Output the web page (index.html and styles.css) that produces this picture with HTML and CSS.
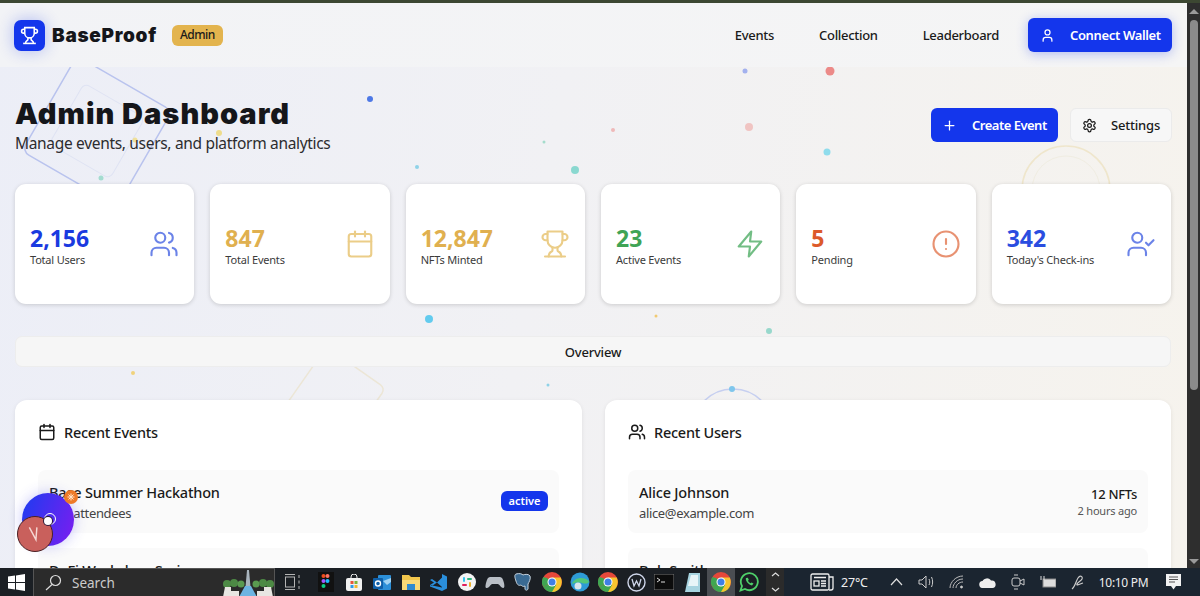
FILE: index.html
```html
<!DOCTYPE html>
<html lang="en">
<head>
    <meta charset="UTF-8">
    <title>BaseProof Admin Dashboard</title>
    <link rel="stylesheet" href="styles.css">
</head>
<body>

<svg class="sprite" aria-hidden="true">
    <symbol id="i_trophy" viewBox="0 0 24 24"><path d="M6 9H4.5a2.5 2.5 0 0 1 0-5H6"/><path d="M18 9h1.5a2.5 2.5 0 0 0 0-5H18"/><path d="M4 22h16"/><path d="M10 14.66V17c0 .55-.47.98-.97 1.21C7.85 18.75 7 20.24 7 22"/><path d="M14 14.66V17c0 .55.47.98.97 1.21C16.15 18.75 17 20.24 17 22"/><path d="M18 2H6v7a6 6 0 0 0 12 0V2Z"/></symbol>
    <symbol id="i_users" viewBox="0 0 24 24"><path d="M16 21v-2a4 4 0 0 0-4-4H6a4 4 0 0 0-4 4v2"/><circle cx="9" cy="7" r="4"/><path d="M22 21v-2a4 4 0 0 0-3-3.87"/><path d="M16 3.13a4 4 0 0 1 0 7.75"/></symbol>
    <symbol id="i_calendar" viewBox="0 0 24 24"><path d="M8 2v4"/><path d="M16 2v4"/><rect width="18" height="18" x="3" y="4" rx="2"/><path d="M3 10h18"/></symbol>
    <symbol id="i_zap" viewBox="0 0 24 24"><path d="M13 2 3 14h9l-1 8 10-12h-9l1-8z"/></symbol>
    <symbol id="i_alert" viewBox="0 0 24 24"><circle cx="12" cy="12" r="10"/><path d="M12 8v4"/><path d="M12 16h.01"/></symbol>
    <symbol id="i_check" viewBox="0 0 24 24"><path d="M16 21v-2a4 4 0 0 0-4-4H6a4 4 0 0 0-4 4v2"/><circle cx="9" cy="7" r="4"/><path d="M16 11l2 2 4-4"/></symbol>
    <symbol id="i_user" viewBox="0 0 24 24"><path d="M19 21v-2a4 4 0 0 0-4-4H9a4 4 0 0 0-4 4v2"/><circle cx="12" cy="7" r="4"/></symbol>
    <symbol id="i_plus" viewBox="0 0 24 24"><path d="M5 12h14"/><path d="M12 5v14"/></symbol>
    <symbol id="i_gear" viewBox="0 0 24 24"><path d="M12.22 2h-.44a2 2 0 0 0-2 2v.18a2 2 0 0 1-1 1.73l-.43.25a2 2 0 0 1-2 0l-.15-.08a2 2 0 0 0-2.73.73l-.22.38a2 2 0 0 0 .73 2.73l.15.1a2 2 0 0 1 1 1.72v.51a2 2 0 0 1-1 1.74l-.15.09a2 2 0 0 0-.73 2.73l.22.38a2 2 0 0 0 2.73.73l.15-.08a2 2 0 0 1 2 0l.43.25a2 2 0 0 1 1 1.73V20a2 2 0 0 0 2 2h.44a2 2 0 0 0 2-2v-.18a2 2 0 0 1 1-1.73l.43-.25a2 2 0 0 1 2 0l.15.08a2 2 0 0 0 2.73-.73l.22-.39a2 2 0 0 0-.73-2.73l-.15-.08a2 2 0 0 1-1-1.74v-.5a2 2 0 0 1 1-1.74l.15-.09a2 2 0 0 0 .73-2.73l-.22-.38a2 2 0 0 0-2.73-.73l-.15.08a2 2 0 0 1-2 0l-.43-.25a2 2 0 0 1-1-1.73V4a2 2 0 0 0-2-2z"/><circle cx="12" cy="12" r="3"/></symbol>
    <symbol id="chrome_logo" viewBox="0 0 20 20">
        <circle cx="10" cy="10" r="10" fill="#e5483a"/>
        <path d="M10 10 1.300 15A10 10 0 0 1 1.300 5L5 6z" fill="#3fa652"/>
        <path d="M10 10 1.300 15A10 10 0 0 0 10 20a10 10 0 0 0 8.700-5z" fill="#3fa652"/>
        <path d="M10 5.500h8.700A10 10 0 0 1 10 20l4-7z" fill="#f6c42f"/>
        <circle cx="10" cy="10" r="4.500" fill="#fff"/>
        <circle cx="10" cy="10" r="3.500" fill="#3f7fe6"/>
    </symbol>
</svg>

<div class="top_strip"></div>

<div class="window">
    <div class="page">
        <!-- floating shapes behind the content -->
        <svg class="backdrop" viewBox="0 3 1187 565" aria-hidden="true">
            <g fill="none">
                <rect x="42" y="76" width="110" height="110" rx="8" transform="rotate(30 97 131)" stroke="#b9c3ee" stroke-width="1.5"/>
                <rect x="62" y="96" width="70" height="70" rx="6" transform="rotate(30 97 131)" stroke="#dfe3f3"/>
                <circle cx="1066" cy="190" r="44" stroke="#efe6cc" stroke-width="1.5"/>
                <circle cx="1066" cy="190" r="34" stroke="#f0ede2"/>
                <rect x="326.500" y="347" width="72" height="72" rx="6" transform="rotate(35 326.500 347)" stroke="#ece6d6" stroke-width="1.5"/>
                <circle cx="733" cy="430" r="41" stroke="#c6cff0" stroke-width="1.5"/>
            </g>
            <circle cx="370" cy="99" r="3" fill="#4d78e6"/>
            <circle cx="745" cy="71" r="2.5" fill="#a3b1ee"/>
            <circle cx="830" cy="71" r="4.5" fill="#ec8a88"/>
            <circle cx="749" cy="127" r="4" fill="#f0c4c2"/>
            <circle cx="827" cy="152" r="3.5" fill="#8fdcec"/>
            <circle cx="544" cy="142" r="1.5" fill="#a5dccc"/>
            <circle cx="613" cy="130" r="2" fill="#efb9b9"/>
            <circle cx="417" cy="167" r="2" fill="#8fd2e8"/>
            <circle cx="575" cy="170" r="4" fill="#8ad8d0"/>
            <circle cx="135" cy="140" r="2.5" fill="#efe09a"/>
            <circle cx="219" cy="133" r="3" fill="#eedc8c"/>
            <circle cx="101" cy="178" r="2.5" fill="#a4dcd0"/>
            <circle cx="429" cy="319" r="4" fill="#63cbee"/>
            <circle cx="656" cy="316" r="1.5" fill="#f1ca72"/>
            <circle cx="769" cy="331" r="3" fill="#98d8cc"/>
            <circle cx="133" cy="373" r="2" fill="#f0d27c"/>
            <circle cx="548" cy="385" r="1.5" fill="#8fd2e8"/>
            <circle cx="732" cy="389" r="3" fill="#7fc6ec"/>
        </svg>

        <div class="nav">
            <div class="logo">
                <svg class="logo_icon" viewBox="0 0 24 24"><use href="#i_trophy"/></svg>
            </div>
            <div class="logo_text">BaseProof</div>
            <div class="admin_badge">Admin</div>
            <div class="nav_links">
                <a href="#" class="nav_link">Events</a>
                <a href="#" class="nav_link">Collection</a>
                <a href="#" class="nav_link">Leaderboard</a>
            </div>
            <a href="#" class="btn btn_primary btn_wallet">
                <svg class="btn_icon" viewBox="0 0 24 24"><use href="#i_user"/></svg>
                Connect Wallet
            </a>
        </div>

        <div class="content">
            <div class="head">
                <div>
                    <h1 class="head_title">Admin Dashboard</h1>
                    <p class="head_intro">Manage events, users, and platform analytics</p>
                </div>
                <div class="head_actions">
                    <a href="#" class="btn btn_primary btn_create">
                        <svg class="btn_icon" viewBox="0 0 24 24"><use href="#i_plus"/></svg>
                        Create Event
                    </a>
                    <a href="#" class="btn btn_light">
                        <svg class="btn_icon" viewBox="0 0 24 24"><use href="#i_gear"/></svg>
                        Settings
                    </a>
                </div>
            </div>

            <div class="stats">
                <div class="stat">
                    <div class="stat_text"><div class="stat_value blue">2,156</div><div class="stat_label">Total Users</div></div>
                    <svg class="stat_icon stroke_blue" viewBox="0 0 24 24"><use href="#i_users"/></svg>
                </div>
                <div class="stat">
                    <div class="stat_text"><div class="stat_value gold">847</div><div class="stat_label">Total Events</div></div>
                    <svg class="stat_icon stroke_gold" viewBox="0 0 24 24"><use href="#i_calendar"/></svg>
                </div>
                <div class="stat">
                    <div class="stat_text"><div class="stat_value gold">12,847</div><div class="stat_label">NFTs Minted</div></div>
                    <svg class="stat_icon stroke_gold" viewBox="0 0 24 24"><use href="#i_trophy"/></svg>
                </div>
                <div class="stat">
                    <div class="stat_text"><div class="stat_value green">23</div><div class="stat_label">Active Events</div></div>
                    <svg class="stat_icon stroke_green" viewBox="0 0 24 24"><use href="#i_zap"/></svg>
                </div>
                <div class="stat">
                    <div class="stat_text"><div class="stat_value orange">5</div><div class="stat_label">Pending</div></div>
                    <svg class="stat_icon stroke_orange" viewBox="0 0 24 24"><use href="#i_alert"/></svg>
                </div>
                <div class="stat">
                    <div class="stat_text"><div class="stat_value blue2">342</div><div class="stat_label">Today's Check-ins</div></div>
                    <svg class="stat_icon stroke_blue" viewBox="0 0 24 24"><use href="#i_check"/></svg>
                </div>
            </div>

            <div class="tabs">Overview</div>

            <div class="panels">
                <div class="panel">
                    <div class="panel_title">
                        <svg class="panel_icon" viewBox="0 0 24 24"><use href="#i_calendar"/></svg>
                        Recent Events
                    </div>
                    <div class="row">
                        <div>
                            <div class="row_name">Base Summer Hackathon</div>
                            <div class="row_sub">156 attendees</div>
                        </div>
                        <span class="tag_active">active</span>
                    </div>
                    <div class="row">
                        <div class="row_name">DeFi Workshop Series</div>
                    </div>
                </div>
                <div class="panel">
                    <div class="panel_title">
                        <svg class="panel_icon" viewBox="0 0 24 24"><use href="#i_users"/></svg>
                        Recent Users
                    </div>
                    <div class="row">
                        <div>
                            <div class="row_name">Alice Johnson</div>
                            <div class="row_sub">alice@example.com</div>
                        </div>
                        <div class="row_right">
                            <div class="row_nfts">12 NFTs</div>
                            <div class="row_time">2 hours ago</div>
                        </div>
                    </div>
                    <div class="row">
                        <div class="row_name">Bob Smith</div>
                    </div>
                </div>
            </div>
        </div>

        <!-- browser extension widget -->
        <div class="widget">
            <div class="widget_ball"></div>
            <div class="widget_ring"></div>
            <div class="widget_badge">
                <svg viewBox="0 0 14 14"><path d="M7 3.500v7M3.500 7h7M4.500 4.500l5 5M9.500 4.500l-5 5" stroke="#ffe3c8"/></svg>
            </div>
            <div class="widget_red">
                <svg viewBox="0 0 36 36"><path d="M12 11l7 13 1-13" fill="none" stroke="#f6d8d4" stroke-width="1.500"/></svg>
            </div>
            <div class="widget_dot"></div>
        </div>
    </div>

    <div class="scrollbar">
        <div class="scroll_up"></div>
        <div class="scroll_thumb"></div>
        <div class="scroll_down"></div>
    </div>
</div>

<div class="taskbar">
    <div class="task_start">
        <svg width="17" height="17" viewBox="0 0 17 17"><path fill="#fff" d="M0 2.600 7 1.600v6.500H0zM8 1.500 17 0v8.100H8zM0 9h7v6.500L0 14.500zM8 9h9v8l-9-1.400z"/></svg>
    </div>
    <div class="task_search">
        <svg width="17" height="17" viewBox="0 0 17 17" fill="none" stroke="#ddd" stroke-width="1.200"><circle cx="10.500" cy="6.500" r="5"/><path d="M7 10.500 1 16"/></svg>
        <span class="task_search_text">Search</span>
        <svg class="task_deco" width="52" height="28" viewBox="0 0 52 28">
            <circle cx="5" cy="15" r="4" fill="#4d8a45"/><circle cx="12" cy="14" r="4" fill="#4d8a45"/><circle cx="19" cy="15" r="3.500" fill="#5a9a50"/>
            <circle cx="34" cy="15" r="3.500" fill="#5a9a50"/><circle cx="41" cy="14" r="4" fill="#4d8a45"/><circle cx="48" cy="15" r="4" fill="#4d8a45"/>
            <path d="M25 1h2l1.500 17h-5z" fill="#a9b4bd"/>
            <path d="M3 18h6v4h8v6H1zM35 22h7v-4h7l2 10H35z" fill="#e8e6e2"/>
            <path d="M17 28l6-11h6l6 11z" fill="#6db4e2"/>
        </svg>
    </div>
    <div class="task_view">
        <svg width="17" height="16" viewBox="0 0 17 16" fill="none" stroke="#b4b4b4"><path d="M1 .500h10M1 15.500h10"/><rect x="1.500" y="3" width="9" height="10"/><path d="M15 1v3M15 6.500v3M15 12v3"/></svg>
    </div>
    <div class="task_apps">
        <div class="app">
            <svg width="16" height="20" viewBox="0 0 16 20"><rect width="16" height="20" fill="#111"/><circle cx="5.500" cy="4" r="2" fill="#f24e1e"/><circle cx="9.500" cy="4" r="2" fill="#ff7262"/><circle cx="5.500" cy="9" r="2" fill="#a259ff"/><circle cx="9.500" cy="9" r="2" fill="#1abcfe"/><circle cx="5.500" cy="14" r="2" fill="#0acf83"/></svg>
        </div>
        <div class="app">
            <svg width="16" height="17" viewBox="0 0 16 17"><path d="M5 4V3a3 3 0 0 1 6 0v1" fill="none" stroke="#eee"/><rect y="4" width="16" height="13" rx="2" fill="#f1f1f1"/><rect x="4.500" y="7" width="3" height="3" fill="#e8553a"/><rect x="8.500" y="7" width="3" height="3" fill="#7cb53a"/><rect x="4.500" y="11" width="3" height="3" fill="#2f9be8"/><rect x="8.500" y="11" width="3" height="3" fill="#f5b52e"/></svg>
        </div>
        <div class="app">
            <svg width="18" height="17" viewBox="0 0 18 17"><rect x="5" y="1" width="13" height="15" rx="1" fill="#2c8fd8"/><rect x="0" y="4" width="10" height="11" rx="1" fill="#0f5fa8"/><circle cx="5" cy="9.500" r="2.500" fill="none" stroke="#fff" stroke-width="1.400"/><path d="M10 7l8-3v4l-4 3z" fill="#9fd2f2"/></svg>
        </div>
        <div class="app">
            <svg width="18" height="16" viewBox="0 0 18 16"><path d="M0 1h7l2 2h9v13H0z" fill="#f2c64c"/><path d="M0 6h18v10H0z" fill="#f8d978"/><rect x="5" y="10" width="8" height="6" fill="#2f8ad0"/></svg>
        </div>
        <div class="app">
            <svg width="17" height="17" viewBox="0 0 17 17"><path d="M12 0l5 2.500v12L12 17 0 12.500V11l12 2.500zM12 3.500 7 8.500 2 5 0 6l4 2.500L0 11l2 1 5-3.500 5 4.500z" fill="#2a8fdc"/></svg>
        </div>
        <div class="app">
            <svg width="18" height="18" viewBox="0 0 18 18"><circle cx="9" cy="9" r="9" fill="#f4f4f4"/><rect x="5" y="4" width="2" height="5" rx="1" fill="#36c5f0"/><rect x="11" y="9" width="2" height="5" rx="1" fill="#ecb22e"/><rect x="9" y="5" width="5" height="2" rx="1" fill="#2eb67d"/><rect x="4" y="11" width="5" height="2" rx="1" fill="#e01e5a"/></svg>
        </div>
        <div class="app">
            <svg width="20" height="13" viewBox="0 0 20 13"><path d="M5 1h10c2 0 3 2 4 6 .6 3 .6 5-1 5s-3-3-5-4H7c-2 1-3 4-5 4S.400 10 1 7c1-4 2-6 4-6z" fill="#b9bfc6"/></svg>
        </div>
        <div class="app">
            <svg width="18" height="19" viewBox="0 0 18 19"><path d="M2 1c4-1 6 0 7 1 2-1 6-1 7 1 1 3-1 6-2 8v5c-1 2-3 1-3 0v-3c-2 1-3 0-4-1-2 1-4 0-5-4C1 5 0 2 2 1z" fill="#3a6a92" stroke="#c7d3dd"/></svg>
        </div>
        <div class="app">
            <svg class="chrome" viewBox="0 0 20 20"><use href="#chrome_logo"/></svg>
        </div>
        <div class="app">
            <svg width="20" height="20" viewBox="0 0 20 20"><circle cx="10" cy="10" r="9.500" fill="#2e9bd6"/><path d="M2 12c2-7 12-8 17-3 0 3-4 3-7 2-4-1-8 0-10 1z" fill="#52c77a"/><circle cx="8" cy="14" r="3.500" fill="#d7e4ea"/></svg>
        </div>
        <div class="app">
            <svg class="chrome" viewBox="0 0 20 20"><use href="#chrome_logo"/></svg>
        </div>
        <div class="app">
            <svg width="19" height="19" viewBox="0 0 19 19" fill="none" stroke="#cfd6ea"><circle cx="9.500" cy="9.500" r="8.500" stroke-width="1.400"/><path d="M5 6l2 7 2.500-5 2.500 5 2-7" stroke-width="1.300"/></svg>
        </div>
        <div class="app">
            <svg width="20" height="16" viewBox="0 0 20 16"><rect width="20" height="16" fill="#0c0c0c" stroke="#777"/><path d="M3 4l3 2-3 2M7 8h4" stroke="#ddd" fill="none"/></svg>
        </div>
        <div class="app">
            <svg width="15" height="19" viewBox="0 0 15 19"><path d="M4 0h11v19H0z" fill="#a7d4e0"/><path d="M6 2h7v11H3z" fill="#e8f5f8"/></svg>
        </div>
        <div class="app app_active">
            <svg class="chrome" viewBox="0 0 20 20"><use href="#chrome_logo"/></svg>
        </div>
        <div class="app">
            <svg width="20" height="20" viewBox="0 0 20 20"><path d="M1.500 18.500 3 14a8.500 8.500 0 1 1 3 3z" fill="none" stroke="#4fd06a" stroke-width="1.800"/><path d="M7 6c-1 2 2 6.500 6 7.500l1.500-2-2-1-1 .8c-1-.5-2-1.500-2.500-2.500l.8-1-1-2z" fill="#4fd06a"/></svg>
        </div>
    </div>
    <div class="task_more">
        <svg width="9" height="22" viewBox="0 0 9 22" fill="none" stroke="#ddd" stroke-width="1.200"><path d="M1 5l3.500-3L8 5M1 17l3.500 3L8 17"/></svg>
    </div>
    <div class="task_tray">
        <svg class="tray_news" width="24" height="18" viewBox="0 0 24 18" fill="none" stroke="#eee" stroke-width="1.300"><rect x="1" y="1" width="18" height="16" rx="1.500"/><path d="M19 4h4v11a2 2 0 0 1-2 2h-2"/><rect x="4" y="8" width="5" height="5"/><path d="M4 4.500h12M11 8h5M11 10.500h5M11 13h5"/></svg>
        <span class="tray_temp">27°C</span>
        <svg class="tray_caret" width="13" height="8" viewBox="0 0 13 8" fill="none" stroke="#ddd" stroke-width="1.200"><path d="M1 7l5.500-6L12 7"/></svg>
        <svg class="tray_icon" width="16" height="14" viewBox="0 0 16 14" fill="none" stroke="#ccc"><path d="M1 5v4h3l4 4V1L4 5zM11 4c1 2 1 4 0 6M13.500 2c1.500 3 1.500 7 0 10"/></svg>
        <svg class="tray_icon" width="15" height="14" viewBox="0 0 15 14" fill="none" stroke="#bbb"><path d="M1 13C1 7 7 1 14 1M4 13c0-4 4-9 10-9M7 13c0-3 3-6 7-6"/><circle cx="12.500" cy="12" r="1" fill="#eee"/></svg>
        <svg class="tray_icon" width="17" height="11" viewBox="0 0 17 11"><path d="M4 11a3.500 3.500 0 0 1-.5-7A5 5 0 0 1 12 3.500 3.800 3.800 0 0 1 13.500 11z" fill="#eee"/></svg>
        <svg class="tray_icon" width="14" height="18" viewBox="0 0 14 18" fill="none" stroke="#ccc"><rect x="1" y="5" width="8" height="8" rx="2"/><path d="M9 8l4-2v6l-4-2M3 2h4M3 16h4"/></svg>
        <svg class="tray_icon" width="16" height="12" viewBox="0 0 16 12"><rect x="3" y="3" width="13" height="8" fill="#ddd" stroke="#888"/><path d="M1 0v4M4 0v4" stroke="#ddd"/></svg>
        <svg class="tray_icon" width="14" height="16" viewBox="0 0 14 16" fill="none" stroke="#ccc" stroke-width="1.200"><path d="M1 15c3-2 4-8 6-11 2-3 5-2 4 1-1 2-4 3-5 5s3 0 6-1"/></svg>
        <span class="tray_time">10:10 PM</span>
        <svg class="tray_note" width="15" height="16" viewBox="0 0 15 16"><path d="M0 0h15v12H10l-2.500 3.500L5 12H0z" fill="#f2f2f2"/><path d="M3 3h9M3 5.500h9M3 8h6" stroke="#555"/></svg>
    </div>
</div>

</body>
</html>
```
FILE: styles.css
```css
*{
    margin: 0;
    padding: 0;
    box-sizing: border-box;
}
body{
    width: 1200px;
    height: 596px;
    overflow: hidden;
    display: flex;
    flex-direction: column;
    font-family: "Noto Sans", "Liberation Sans", sans-serif;
    color: #1a1a1a;
    background: #1c1f24;
}
a{
    text-decoration: none;
    color: inherit;
}
.sprite{
    width: 0;
    height: 0;
    position: absolute;
}
.top_strip{
    height: 3px;
    flex: none;
    background: #3c4732;
}
.window{
    flex: 1;
    min-height: 0;
    display: flex;
}
.page{
    flex: 1;
    min-width: 0;
    position: relative;
    overflow: hidden;
    background: linear-gradient(100deg, #eceef7 0%, #f1f1f4 45%, #f6f3ed 100%);
}
.backdrop{
    position: absolute;
    left: 0;
    top: 0;
    width: 1187px;
    height: 565px;
}

/* nav */
.nav{
    height: 64px;
    padding: 0 15px 0 14px;
    display: flex;
    align-items: center;
    position: relative;
    background: linear-gradient(90deg, #f2f3f6, #f5f5f5);
}
.logo{
    width: 31px;
    height: 31px;
    border-radius: 7px;
    background: #1436ec;
    box-shadow: 0 0 16px rgba(20,54,236,0.3);
    display: flex;
    align-items: center;
    justify-content: center;
}
.logo_icon{
    width: 19px;
    height: 19px;
    fill: none;
    stroke: #fff;
    stroke-width: 2;
}
.logo_text{
    margin-left: 7px;
    font-family: "Inter", "Liberation Sans", sans-serif;
    font-weight: 900;
    font-size: 19px;
    letter-spacing: 0.7px;
    color: #15161a;
}
.admin_badge{
    margin-left: 15px;
    height: 21px;
    line-height: 20px;
    padding: 0 8px;
    border-radius: 6px;
    background: #e3b44e;
    font-size: 12px;
    font-weight: 500;
    letter-spacing: -0.5px;
}
.nav_links{
    margin-left: auto;
    margin-right: 29px;
    display: flex;
    gap: 45px;
}
.nav_link{
    font-size: 13px;
    font-weight: 500;
    letter-spacing: -0.3px;
}
.btn{
    height: 34px;
    border-radius: 6px;
    font-size: 13px;
    font-weight: 600;
    letter-spacing: -0.35px;
    display: flex;
    align-items: center;
}
.btn_primary{
    background: #1436ec;
    color: #fff;
}
.btn_wallet{
    width: 144px;
    padding-left: 12px;
    gap: 15px;
    box-shadow: 0 2px 12px rgba(20,54,236,0.3);
}
.btn_create{
    width: 127px;
    padding-left: 11px;
    gap: 15px;
    letter-spacing: -0.5px;
}
.btn_light{
    width: 102px;
    padding-left: 11px;
    gap: 14px;
    font-weight: 500;
    letter-spacing: -0.2px;
    background: #f7f7f7;
    border: 1px solid #ebebeb;
}
.btn_icon{
    width: 15px;
    height: 15px;
    flex: none;
    fill: none;
    stroke: currentColor;
    stroke-width: 2;
    stroke-linecap: round;
    stroke-linejoin: round;
}

/* main */
.content{
    position: relative;
    padding: 29px 16px 0 15px;
}
.head{
    height: 58px;
    display: flex;
    justify-content: space-between;
    align-items: center;
}
.head_title{
    font-family: "Inter", "Liberation Sans", sans-serif;
    font-size: 29px;
    font-weight: 900;
    letter-spacing: 1px;
    line-height: 36px;
    color: #15161a;
}
.head_intro{
    font-size: 15.5px;
    letter-spacing: -0.32px;
    line-height: 22px;
    color: #2c2c2e;
}
.head_actions{
    display: flex;
    gap: 12px;
    margin-right: -1px;
}
.stats{
    margin-top: 30px;
    display: grid;
    grid-template-columns: repeat(6, 1fr);
    gap: 16px;
}
.stat{
    height: 120px;
    padding: 0 15px;
    border-radius: 11px;
    background: #fff;
    box-shadow: 0 1px 4px rgba(0,0,0,0.16);
    display: flex;
    justify-content: space-between;
    align-items: center;
}
.stat_text{
    margin-top: 4px;
}
.stat_value{
    font-size: 23px;
    font-weight: 700;
    line-height: 28px;
}
.stat_label{
    font-size: 11px;
    letter-spacing: -0.2px;
    line-height: 16px;
    color: #3b3b3b;
}
.blue{ color: #1a3ae0; }
.blue2{ color: #2a4de0; }
.gold{ color: #e0b04f; }
.green{ color: #3fa455; }
.orange{ color: #dc5a2a; }
.stat_icon{
    width: 30px;
    height: 30px;
    flex: none;
    fill: none;
    stroke-width: 1.7;
    stroke-linecap: round;
    stroke-linejoin: round;
}
.stroke_blue{ stroke: #6b83e8; }
.stroke_gold{ stroke: #ebcd88; }
.stroke_green{ stroke: #72bd84; }
.stroke_orange{ stroke: #e89272; }

.tabs{
    margin-top: 32px;
    height: 31px;
    line-height: 30px;
    text-align: center;
    font-size: 13px;
    font-weight: 500;
    letter-spacing: -0.2px;
    border-radius: 7px;
    background: #f6f6f6;
    border: 1px solid #ededed;
}
.panels{
    margin-top: 33px;
    display: grid;
    grid-template-columns: 567px 566px;
    gap: 23px;
}
.panel{
    height: 300px;
    padding: 23px;
    border-radius: 12px;
    background: #fff;
    box-shadow: 0 1px 4px rgba(0,0,0,0.08);
}
.panel_title{
    height: 18px;
    margin-bottom: 29px;
    display: flex;
    align-items: center;
    gap: 8px;
    font-size: 14.5px;
    font-weight: 500;
    letter-spacing: -0.25px;
}
.panel_icon{
    width: 18px;
    height: 18px;
    fill: none;
    stroke: #1a1a1a;
    stroke-width: 2;
    stroke-linecap: round;
    stroke-linejoin: round;
}
.row{
    height: 63px;
    margin-bottom: 15px;
    padding: 11px 11px 0;
    border-radius: 8px;
    background: #fafafa;
    display: flex;
    justify-content: space-between;
    align-items: flex-start;
}
.row_name{
    font-size: 14.5px;
    font-weight: 500;
    letter-spacing: -0.2px;
    line-height: 22px;
}
.row_sub{
    font-size: 13px;
    letter-spacing: -0.35px;
    line-height: 20px;
    color: #444;
}
.tag_active{
    height: 20px;
    margin-top: 10px;
    line-height: 19px;
    padding: 0 7.5px;
    border-radius: 6px;
    background: #1436ec;
    color: #fff;
    font-size: 11px;
    font-weight: 600;
}
.row_right{
    margin-top: 4px;
    text-align: right;
}
.row_nfts{
    font-size: 13px;
    font-weight: 500;
    letter-spacing: -0.3px;
    line-height: 18px;
}
.row_time{
    font-size: 11px;
    letter-spacing: -0.2px;
    line-height: 16px;
    color: #555;
}

/* floating widget */
.widget{
    position: absolute;
    left: 17px;
    top: 487px;
    width: 62px;
    height: 62px;
}
.widget_ball{
    position: absolute;
    left: 5px;
    top: 3px;
    width: 52px;
    height: 53px;
    border-radius: 50%;
    background: linear-gradient(110deg, #1c3cf0, #7c1df0);
    box-shadow: 0 0 14px rgba(70,70,240,0.3);
}
.widget_ring{
    position: absolute;
    left: 27px;
    top: 23px;
    width: 12px;
    height: 12px;
    border-radius: 50%;
    border: 1.5px solid #fff;
}
.widget_badge{
    position: absolute;
    left: 47px;
    top: 0;
    width: 14px;
    height: 14px;
    border-radius: 50%;
    background: #ee7a28;
}
.widget_badge svg{
    display: block;
}
.widget_red{
    position: absolute;
    left: 0;
    top: 26px;
    width: 36px;
    height: 36px;
    border-radius: 50%;
    background: #c9605c;
    border: 1px solid #4a2024;
}
.widget_red svg{
    display: block;
    width: 34px;
    height: 34px;
}
.widget_dot{
    position: absolute;
    left: 27px;
    top: 27px;
    width: 8px;
    height: 8px;
    border-radius: 50%;
    background: #fff;
    box-shadow: 0 0 0 1px #2a1a3a;
}

/* browser scrollbar */
.scrollbar{
    width: 13px;
    flex: none;
    background: #2e2e2e;
    display: flex;
    flex-direction: column;
    align-items: center;
}
.scroll_up,
.scroll_down{
    width: 0;
    height: 0;
    border-left: 5px solid transparent;
    border-right: 5px solid transparent;
}
.scroll_up{
    margin-top: 6px;
    border-bottom: 5px solid #9a9a9a;
}
.scroll_down{
    margin-top: auto;
    margin-bottom: 4px;
    border-top: 5px solid #9a9a9a;
}
.scroll_thumb{
    width: 8px;
    height: 370px;
    margin-top: 6px;
    border-radius: 4px;
    background: #8b8b8b;
}

/* windows taskbar */
.taskbar{
    height: 28px;
    flex: none;
    display: flex;
    align-items: center;
    background: #1b1f24;
    color: #eee;
}
.task_start{
    width: 33px;
    display: flex;
    justify-content: center;
}
.task_search{
    width: 242px;
    height: 28px;
    padding-left: 11px;
    display: flex;
    align-items: center;
    background: #2b2b2b;
    border: 1px solid #555;
    border-bottom: none;
    overflow: hidden;
}
.task_search_text{
    margin-left: 10px;
    font-size: 13.5px;
    color: #ccc;
}
.task_deco{
    margin-left: auto;
}
.task_view{
    width: 33px;
    margin-left: 1px;
    display: flex;
    justify-content: center;
}
.task_apps{
    margin-left: 3px;
    display: flex;
}
.app{
    width: 28.200px;
    height: 28px;
    display: flex;
    align-items: center;
    justify-content: center;
}
.app_active{
    background: #4a4d52;
}
.chrome{
    width: 20px;
    height: 20px;
}
.task_more{
    width: 18px;
    height: 28px;
    margin-left: 3px;
    background: #2b2b2b;
    display: flex;
    align-items: center;
    justify-content: center;
}
.task_tray{
    flex: 1;
    height: 28px;
    padding-left: 26px;
    display: flex;
    align-items: center;
    background: #1b2530;
}
.tray_temp{
    margin-left: 7px;
    font-size: 12.5px;
    letter-spacing: -0.2px;
}
.tray_caret{
    margin-left: 22px;
}
.tray_icon{
    margin-left: 15px;
}
.tray_time{
    margin-left: 14px;
    font-size: 12px;
    letter-spacing: -0.3px;
}
.tray_note{
    margin-left: 18px;
}
```
